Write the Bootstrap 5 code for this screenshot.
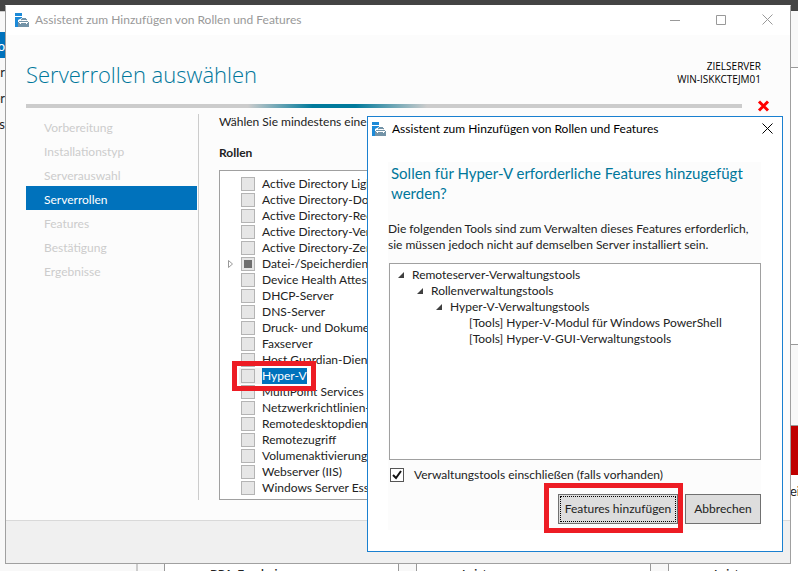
<!DOCTYPE html>
<html lang="de">
<head>
<meta charset="utf-8">
<meta name="viewport" content="width=device-width, initial-scale=1">
<title>Assistent zum Hinzufügen von Rollen und Features</title>
<link href="https://cdn.jsdelivr.net/npm/bootstrap@5.3.0/dist/css/bootstrap.min.css" rel="stylesheet">
<style>
  :root { --ink:#222; --accent:#0072bc; --teal:#00779b; --mark:#ed1c24; }
  body { font-family:Lato,"Open Sans","Noto Sans",sans-serif; font-size:12px; line-height:16px; color:var(--ink); background:#f8f8f8; }
  h1, h2, h3, p { margin:0; }

  /* desktop behind the windows */
  .desk-bar { height:11px; background:#444; }
  .desk-left { width:136px; padding-top:20px; border-top:1px solid #ccc; }
  .desk-item { height:26px; line-height:28px; font-size:13px; white-space:nowrap; color:var(--ink); text-decoration:none; width:5px; display:flex; justify-content:flex-end; overflow:hidden; }
  .desk-item.is-current { background:var(--accent); color:#fff; }
  .desk-right { width:8px; margin-top:56px; }
  .desk-panel { height:278px; background:#fff; border-top:1px solid #999; border-bottom:1px solid #999; }
  .desk-alert { height:50px; margin-top:80px; background:#c00000; border-top:1px solid #999; }
  .desk-note { height:88px; background:#fff; padding-top:8px; font-size:13px; overflow:hidden; }
  .desk-tiles { left:136px; right:0; bottom:0; height:8px; border-left:2px solid #ccc; padding-left:26px; gap:17px; overflow:hidden; background:#f8f8f8; }
  .desk-tile { flex:0 0 235px; background:#fff; border:solid #999; border-width:0 1px; padding:3px 0 0 45px; font-weight:600; }

  /* windows */
  .win { display:flex; flex-direction:column; background:#fff; overflow:hidden; }
  .win-main { inset:5px 7px 7px 5px; border:1px solid #a0a0a0; border-top-color:#fff; z-index:1; }
  .win-dialog { left:367px; right:15px; top:116px; bottom:19px; border:1px solid #1a80d0; z-index:2; }
  .win-title { padding-left:9px; flex:none; }
  .win-icon { margin-right:6px; }
  .win-main .win-title { height:27px; color:#999; margin-bottom:2px; }
  .win-dialog .win-title { height:23px; padding-left:4px; color:#000; margin-bottom:2px; }
  .win-btn { border:0; background:none; padding:0; width:46px; height:100%; display:flex; align-items:center; justify-content:center; color:inherit; }
  .win-dialog .win-btn { width:30px; }

  .wiz { background:#fcfcfc; flex:1; padding:0 20px; min-height:0; }
  .wiz-head { height:69px; padding-right:9px; }
  .wiz-head h1 { font-family:"Open Sans",sans-serif; font-size:22px; line-height:32px; font-weight:300; color:var(--teal); padding-top:23px; }
  .wiz-target { font-family:"Open Sans",sans-serif; font-size:10px; line-height:13px; padding-top:25px; color:#000; }
  .wiz-bar { height:4px; background:linear-gradient(90deg,#ccc 31%,#007a9c 40%,#007a9c 46%,#ccc 56%); }
  .wiz-content { min-height:0; }
  .wiz-steps { width:173px; border-right:1px solid #ccc; padding-right:1px; flex:none; }
  .wiz-step { display:block; height:24px; line-height:24px; padding:2px 0 0 18px; color:#ccc; text-decoration:none; }
  .wiz-step.is-current { background:var(--accent); color:#fff; }
  .wiz-body { padding-left:20px; white-space:nowrap; min-width:0; }
  .wiz-body h3 { font-size:12px; line-height:16px; font-weight:700; margin:15px 0 9px; }
  .roles { border:1px solid #a0a0a0; background:#fff; padding:5px 0 3px 7px; flex:1; min-height:0; }
  .role { height:16px; display:flex; align-items:center; position:relative; }
  .role-arrow { width:14px; flex:none; display:flex; border:0; padding:0; background:none; }
  .tick { appearance:none; width:14px; height:14px; margin:0 7px 0 0; border:1px solid #b4b4b4; background:#e6e6e6; flex:none; }
  .tick-some { background:linear-gradient(#6e6e6e,#6e6e6e) center/8px 8px no-repeat #e6e6e6; }
  .role-mark { background:#f0f0f0; margin-left:12px; padding-left:2px; display:flex; align-items:center; height:16px; position:relative; }
  .role-mark label { background:var(--accent); color:#fff; }
  .wiz-foot { height:43px; flex:none; background:#f0f0f0; border-top:1px solid #d9d9d9; padding:9px 19px 0; gap:8px; }
  .foot-btn { width:75px; height:22px; font-size:12px; line-height:16px; padding:0; border:1px solid #bbb; background:#ddd; color:#888; border-radius:0; }

  /* feature dialog */
  .dlg { background:#fcfcfc; flex:1; margin:20px 21px 21px 20px; min-height:0; }
  .dlg h2 { font-size:15px; line-height:20px; font-weight:400; color:var(--teal); padding:1px 0 0 3px; margin-bottom:18px; }
  .dlg p { white-space:nowrap; }
  .tree { border:1px solid #a0a0a0; background:#fff; flex:1; margin:10px 0 7px 1px; padding:3px 0 0 7px; }
  .tree ul { padding-left:19px; }
  .tree-row { display:flex; align-items:center; height:16px; }
  .tree-arrow { width:15px; display:flex; flex:none; border:0; padding:0; background:none; }
  .tick-on { border-color:#555; background:#fff; margin:0; }
  .tick-box { position:relative; display:flex; }
  .tick-box svg { position:absolute; left:0; top:0; pointer-events:none; }
  .dlg-opt { padding-left:2px; gap:10px; }
  .dlg-foot { padding:11px 0 6px; gap:7px; }
  .dlg-btn { display:block; height:30px; border:1px solid #707070; border-radius:0; background:#ddd; color:var(--ink); font-size:12px; line-height:16px; padding:0; }
  .dlg-btn-main { width:120px; outline:1px dotted #000; outline-offset:-3px; }
  .dlg-btn-side { width:76px; }
  .marker { position:absolute; border:5px solid var(--mark); pointer-events:none; z-index:3; }
  .marker-role { left:-7px; width:84px; top:-7px; height:30px; }
  .marker-btn { inset:-11px -5px -9px -14px; }
</style>
</head>
<body class="vh-100 overflow-hidden position-relative">

<svg class="d-none" xmlns="http://www.w3.org/2000/svg">
  <symbol id="ico-server" viewBox="0 0 14 14">
    <path fill="#1c8ad8" d="M0 0h7v3H0zM0 4h7v1L3 7v7H0z"/>
    <path fill="#7393a7" d="M3 9h1V8h2V6h1V5h4v1h1v2h1v1h1v5H3z"/>
    <path fill="none" stroke="#fff" d="M6.500 8V7.500h5V8M4 9.500h9M5.500 9v2m6-2v2"/>
  </symbol>
  <symbol id="ico-open" viewBox="0 0 8 8"><path fill="#404040" d="M7 1v6H1z"/></symbol>
  <symbol id="ico-x" viewBox="0 0 11 11"><path fill="none" stroke="currentColor" d="M.5.5l10 10M10.500.5l-10 10"/></symbol>
</svg>

<div class="desk-bar"></div>
<div class="d-flex justify-content-between">
  <nav class="desk-left">
    <a href="#" class="desk-item is-current">o</a>
    <a href="#" class="desk-item">r</a>
    <a href="#" class="desk-item">er</a>
    <a href="#" class="desk-item">/s</a>
  </nav>
  <div class="desk-right">
    <div class="desk-panel"></div>
    <div class="desk-alert"></div>
    <div class="desk-note">ei</div>
  </div>
</div>
<div class="desk-tiles d-flex position-absolute">
  <div class="desk-tile">BPA-Ergebnisse</div>
  <div class="desk-tile">Leistung</div>
  <div class="desk-tile">Leistung</div>
</div>

<main class="win win-main position-absolute">
  <div class="win-title d-flex align-items-center">
    <svg class="win-icon" width="14" height="14"><use href="#ico-server"/></svg>
    <span class="me-auto">Assistent zum Hinzufügen von Rollen und Features</span>
    <button class="win-btn" aria-label="Minimieren"><svg width="10" height="10"><path stroke="currentColor" d="M0 5.500h10"/></svg></button>
    <button class="win-btn" aria-label="Maximieren"><svg width="10" height="10"><path fill="none" stroke="currentColor" d="M.5.5h9v9h-9z"/></svg></button>
    <button class="win-btn" aria-label="Schließen"><svg width="11" height="11"><use href="#ico-x"/></svg></button>
  </div>

  <div class="wiz d-flex flex-column">
    <div class="wiz-head d-flex justify-content-between">
      <h1>Serverrollen auswählen</h1>
      <div class="wiz-target text-end">ZIELSERVER<br>WIN-ISKKCTEJM01</div>
    </div>
    <div class="d-flex align-items-start">
      <div class="wiz-bar flex-grow-1"></div>
      <svg class="ms-3 flex-shrink-0" width="12" height="6" overflow="visible"><path stroke="red" stroke-width="3" d="M1-2.500l9 9M10-2.500l-9 9"/></svg>
    </div>
    <div class="wiz-content d-flex flex-grow-1 pt-1 pb-3 mb-1">
      <nav class="wiz-steps">
        <a href="#" class="wiz-step">Vorbereitung</a>
        <a href="#" class="wiz-step">Installationstyp</a>
        <a href="#" class="wiz-step">Serverauswahl</a>
        <a href="#" class="wiz-step is-current" aria-current="step">Serverrollen</a>
        <a href="#" class="wiz-step">Features</a>
        <a href="#" class="wiz-step">Bestätigung</a>
        <a href="#" class="wiz-step">Ergebnisse</a>
      </nav>
      <section class="wiz-body flex-grow-1 d-flex flex-column">
        <p>Wählen Sie mindestens eine</p>
        <h3>Rollen</h3>
        <div class="roles">
          <div class="role"><span class="role-arrow"></span><input class="tick" type="checkbox" id="r1"><label for="r1">Active Directory Light</label></div>
          <div class="role"><span class="role-arrow"></span><input class="tick" type="checkbox" id="r2"><label for="r2">Active Directory-Dom</label></div>
          <div class="role"><span class="role-arrow"></span><input class="tick" type="checkbox" id="r3"><label for="r3">Active Directory-Rech</label></div>
          <div class="role"><span class="role-arrow"></span><input class="tick" type="checkbox" id="r4"><label for="r4">Active Directory-Verb</label></div>
          <div class="role"><span class="role-arrow"></span><input class="tick" type="checkbox" id="r5"><label for="r5">Active Directory-Zerti</label></div>
          <div class="role"><button class="role-arrow" aria-label="Erweitern"><svg width="6" height="8"><path fill="#fff" stroke="#999" d="M1.500.5v7l4-3.500z"/></svg></button><input class="tick tick-some" type="checkbox" id="r6"><label for="r6">Datei-/Speicherdienste</label></div>
          <div class="role"><span class="role-arrow"></span><input class="tick" type="checkbox" id="r7"><label for="r7">Device Health Attesta</label></div>
          <div class="role"><span class="role-arrow"></span><input class="tick" type="checkbox" id="r8"><label for="r8">DHCP-Server</label></div>
          <div class="role"><span class="role-arrow"></span><input class="tick" type="checkbox" id="r9"><label for="r9">DNS-Server</label></div>
          <div class="role"><span class="role-arrow"></span><input class="tick" type="checkbox" id="r10"><label for="r10">Druck- und Dokumen</label></div>
          <div class="role"><span class="role-arrow"></span><input class="tick" type="checkbox" id="r11"><label for="r11">Faxserver</label></div>
          <div class="role"><span class="role-arrow"></span><input class="tick" type="checkbox" id="r12"><label for="r12">Host Guardian-Dienst</label></div>
          <div class="role"><div class="role-mark"><input class="tick" type="checkbox" id="r13"><label for="r13">Hyper-V</label><span class="marker marker-role"></span></div></div>
          <div class="role"><span class="role-arrow"></span><input class="tick" type="checkbox" id="r14"><label for="r14">MultiPoint Services</label></div>
          <div class="role"><span class="role-arrow"></span><input class="tick" type="checkbox" id="r15"><label for="r15">Netzwerkrichtlinien-</label></div>
          <div class="role"><span class="role-arrow"></span><input class="tick" type="checkbox" id="r16"><label for="r16">Remotedesktopdienste</label></div>
          <div class="role"><span class="role-arrow"></span><input class="tick" type="checkbox" id="r17"><label for="r17">Remotezugriff</label></div>
          <div class="role"><span class="role-arrow"></span><input class="tick" type="checkbox" id="r18"><label for="r18">Volumenaktivierungs</label></div>
          <div class="role"><span class="role-arrow"></span><input class="tick" type="checkbox" id="r19"><label for="r19">Webserver (IIS)</label></div>
          <div class="role"><span class="role-arrow"></span><input class="tick" type="checkbox" id="r20"><label for="r20">Windows Server Essen</label></div>
        </div>
      </section>
    </div>
  </div>

  <div class="wiz-foot d-flex justify-content-end">
    <button class="foot-btn" disabled aria-label="Zurück"></button>
    <button class="foot-btn" aria-label="Weiter"></button>
    <button class="foot-btn ms-4" disabled aria-label="Installieren"></button>
    <button class="foot-btn border-secondary" aria-label="Abbrechen"></button>
  </div>
</main>

<section class="win win-dialog position-absolute" role="dialog" aria-labelledby="dlg-h">
  <div class="win-title d-flex align-items-center">
    <svg class="win-icon" width="14" height="14"><use href="#ico-server"/></svg>
    <span class="me-auto">Assistent zum Hinzufügen von Rollen und Features</span>
    <button class="win-btn" aria-label="Schließen"><svg width="11" height="11"><use href="#ico-x"/></svg></button>
  </div>
  <div class="dlg d-flex flex-column">
    <h2 id="dlg-h">Sollen für Hyper-V erforderliche Features hinzugefügt werden?</h2>
    <p>Die folgenden Tools sind zum Verwalten dieses Features erforderlich,<br>sie müssen jedoch nicht auf demselben Server installiert sein.</p>
    <div class="tree">
      <div class="tree-row"><button class="tree-arrow" aria-label="Reduzieren"><svg width="8" height="8"><use href="#ico-open"/></svg></button>Remoteserver-Verwaltungstools</div>
      <ul class="list-unstyled mb-0"><li>
        <div class="tree-row"><button class="tree-arrow" aria-label="Reduzieren"><svg width="8" height="8"><use href="#ico-open"/></svg></button>Rollenverwaltungstools</div>
        <ul class="list-unstyled"><li>
          <div class="tree-row"><button class="tree-arrow" aria-label="Reduzieren"><svg width="8" height="8"><use href="#ico-open"/></svg></button>Hyper-V-Verwaltungstools</div>
          <ul class="list-unstyled">
            <li class="tree-row"><span class="tree-arrow"></span>[Tools] Hyper-V-Modul für Windows PowerShell</li>
            <li class="tree-row"><span class="tree-arrow"></span>[Tools] Hyper-V-GUI-Verwaltungstools</li>
          </ul>
        </li></ul>
      </li></ul>
    </div>
    <div class="dlg-opt d-flex align-items-center">
      <span class="tick-box"><input class="tick tick-on" type="checkbox" id="incl" checked><svg width="14" height="14"><path fill="none" stroke="#111" stroke-width="2" d="M3 7l3 3 5-7"/></svg></span>
      <label for="incl">Verwaltungstools einschließen (falls vorhanden)</label>
    </div>
    <div class="dlg-foot d-flex justify-content-end">
      <div class="position-relative"><button class="dlg-btn dlg-btn-main">Features hinzufügen</button><span class="marker marker-btn"></span></div>
      <button class="dlg-btn dlg-btn-side">Abbrechen</button>
    </div>
  </div>
</section>

<script src="https://cdn.jsdelivr.net/npm/bootstrap@5.3.0/dist/js/bootstrap.bundle.min.js"></script>
</body>
</html>
